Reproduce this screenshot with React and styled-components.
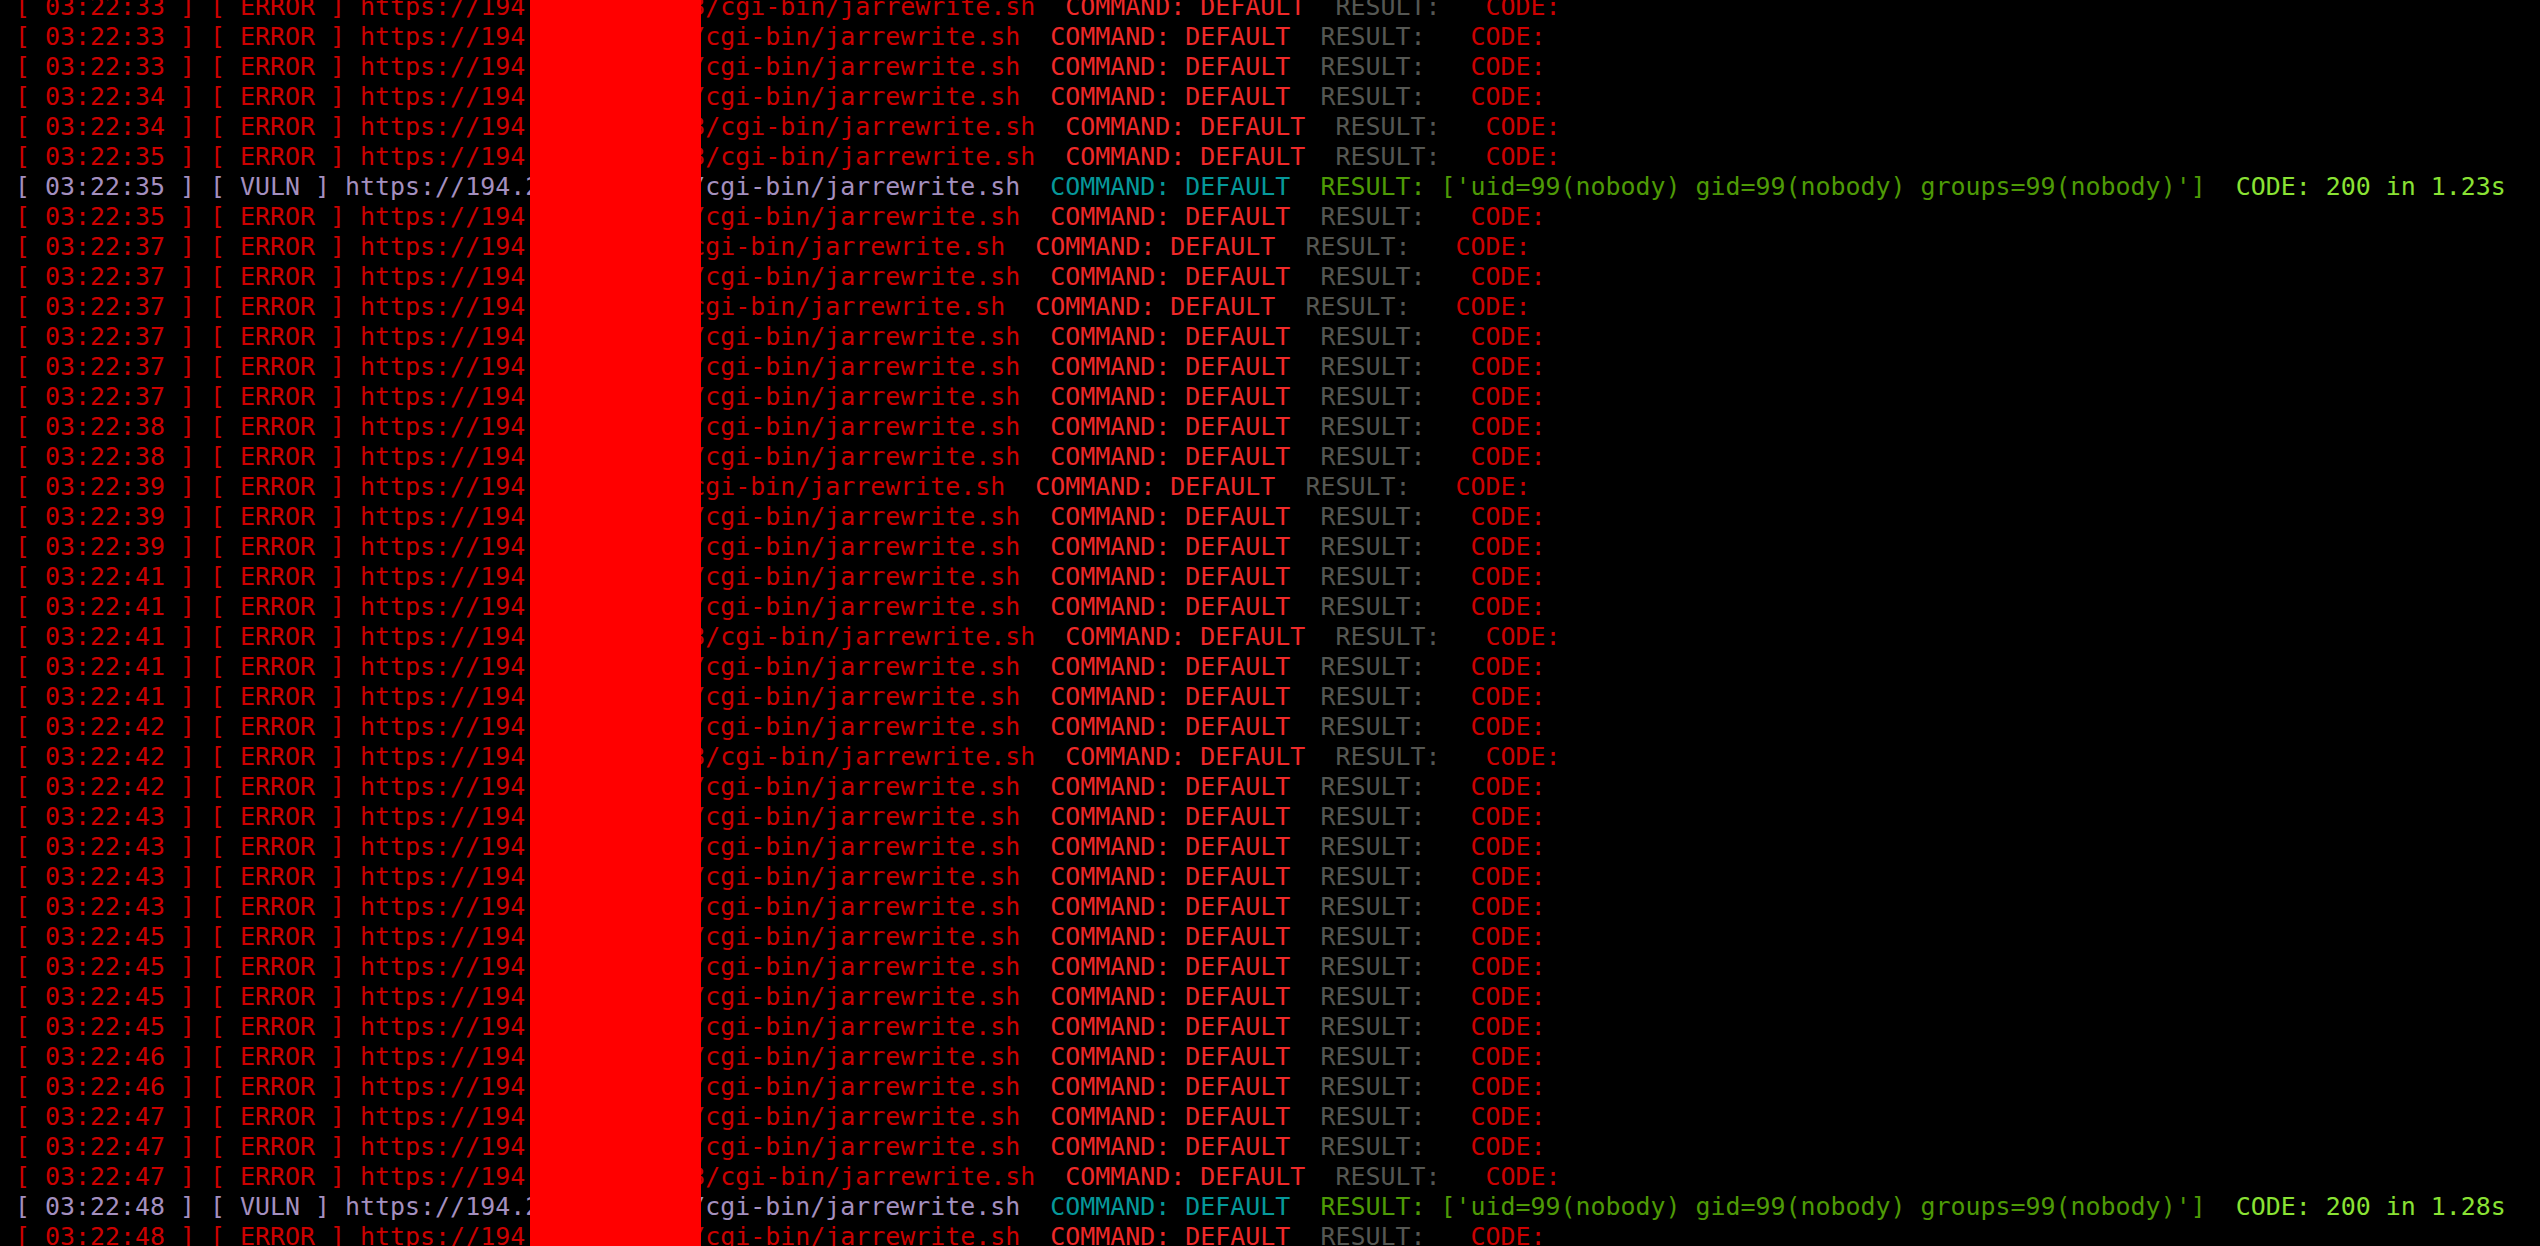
import React from 'react';
import styled, { createGlobalStyle } from 'styled-components';

const Global = createGlobalStyle`
    html, body {
        margin: 0;
        padding: 0;
        background: #000;
        overflow: hidden;
    }
`;

const palette = {
    red: '#cc0000',
    brightRed: '#ef2929',
    gray: '#555753',
    lavender: '#a48fbf',
    cyan: '#06989a',
    green: '#4e9a06',
    brightGreen: '#8ae234'
};

// hidden host part, the length shifts the rest of the line by a column
const hosts = {
    n: '.212.148.93',
    p: '.212.148.193',
    m: '.212.48.93',
    v: '.212.148.193'
};

const rows = [
    ['03:22:33', 'p'], ['03:22:33', 'n'], ['03:22:33', 'n'], ['03:22:34', 'n'],
    ['03:22:34', 'p'], ['03:22:35', 'p'], ['03:22:35', 'v', '1.23s'], ['03:22:35', 'n'],
    ['03:22:37', 'm'], ['03:22:37', 'n'], ['03:22:37', 'm'], ['03:22:37', 'n'],
    ['03:22:37', 'n'], ['03:22:37', 'n'], ['03:22:38', 'n'], ['03:22:38', 'n'],
    ['03:22:39', 'm'], ['03:22:39', 'n'], ['03:22:39', 'n'], ['03:22:41', 'n'],
    ['03:22:41', 'n'], ['03:22:41', 'p'], ['03:22:41', 'n'], ['03:22:41', 'n'],
    ['03:22:42', 'n'], ['03:22:42', 'p'], ['03:22:42', 'n'], ['03:22:43', 'n'],
    ['03:22:43', 'n'], ['03:22:43', 'n'], ['03:22:43', 'n'], ['03:22:45', 'n'],
    ['03:22:45', 'n'], ['03:22:45', 'n'], ['03:22:45', 'n'], ['03:22:46', 'n'],
    ['03:22:46', 'n'], ['03:22:47', 'n'], ['03:22:47', 'n'], ['03:22:47', 'p'],
    ['03:22:48', 'v', '1.28s'], ['03:22:48', 'n']
];

const App = () => {
    const renderRow = ([time, kind, took], i) => {
        const url = `https://194${hosts[kind]}/cgi-bin/jarrewrite.sh`;
        if (kind === 'v') {
            return (
                <Line key={i}>
                    <Seg color={palette.lavender}>{`[ ${time} ] [ VULN ] ${url}  `}</Seg>
                    <Seg color={palette.cyan}>COMMAND: DEFAULT</Seg>
                    {'  '}
                    <Seg color={palette.green}>{`RESULT: ['uid=99(nobody) gid=99(nobody) groups=99(nobody)']`}</Seg>
                    {'  '}
                    <Seg color={palette.brightGreen}>{`CODE: 200 in ${took}`}</Seg>
                </Line>
            );
        }
        return (
            <Line key={i}>
                <Seg color={palette.red}>{`[ ${time} ] [ ERROR ] ${url}  `}</Seg>
                <Seg color={palette.brightRed}>COMMAND: DEFAULT</Seg>
                {'  '}
                <Seg color={palette.gray}>RESULT:</Seg>
                {'   '}
                <Seg color={palette.red}>CODE:</Seg>
            </Line>
        );
    };

    return (
        <Screen>
            <Global />
            <Log>{rows.map(renderRow)}</Log>
            <Redaction />
        </Screen>
    );
};

const Screen = styled.div`
    position: relative;
    width: 2540px;
    height: 1246px;
    overflow: hidden;
    background: #000;
`;

const Log = styled.div`
    display: flex;
    flex-direction: column;
    margin-top: -8px;
    padding-left: 15px;
    font-family: "DejaVu Sans Mono", monospace;
    font-size: 24.93px;
`;

const Line = styled.div`
    height: 30px;
    line-height: 30px;
    white-space: pre;
`;

const Seg = styled.span`
    color: ${(p) => p.color};
`;

const Redaction = styled.div`
    position: absolute;
    top: 0;
    bottom: 0;
    left: 530px;
    width: 171px;
    background: #ff0000;
`;

export default App;
